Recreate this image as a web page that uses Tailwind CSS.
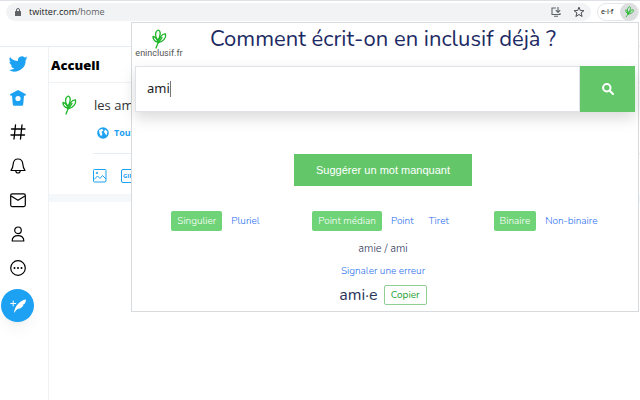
<!doctype html>
<html lang="fr">
  <head>
    <meta charset="UTF-8" />
    <meta name="viewport" content="width=device-width, initial-scale=1.0" />
    <script src="https://cdn.jsdelivr.net/npm/@tailwindcss/browser@4"></script>
    <title>eninclusif.fr</title>
  </head>
  <body class="relative flex h-screen flex-col overflow-hidden bg-white font-['Open_Sans',sans-serif] text-black">
    <svg class="hidden">
      <symbol id="leaf" viewBox="0 0 16 20">
        <g fill="none" stroke="#1fb72a" stroke-width="1.3" stroke-linecap="round" stroke-linejoin="round">
          <path d="M5 19L7 14L11 8.500" />
          <path d="M7 13.500C6.500 10.500 4.500 8 2 7.500C1.800 9.500 3.500 12.500 6.500 13" />
          <path d="M6.800 11.500C3.500 8 4 2 7.300 1C10.300 2 9.500 7.500 6.800 11.500" />
          <path d="M7.500 13.500C7.500 9.500 11 4.500 14.500 5C15.500 8.500 12 13 7.500 13.500" />
        </g>
      </symbol>
    </svg>

    <!-- browser bar -->
    <header class="flex h-[23px] shrink-0 items-center border-t border-[#dee1e6] pr-px pl-1.5">
      <div class="flex h-[18px] grow items-center rounded-full bg-[#f1f3f4] pr-1.5 pl-2">
        <svg class="mr-[7px] h-2 w-2" viewBox="0 0 8 8" aria-hidden="true">
          <rect x="1" y="3" width="6" height="5" rx="0.500" fill="#5f6368" />
          <path d="M2.500 3V2a1.500 1.500 0 0 1 3 0v1" fill="none" stroke="#5f6368" />
        </svg>
        <span class="grow text-[9px] leading-4 text-[#202124]">twitter.com<span class="text-[#5f6368]">/home</span></span>
        <button type="button" aria-label="Installer" class="mr-3">
          <svg class="h-2.5 w-2.5" viewBox="0 0 10 10" fill="none" stroke="#5f6368" stroke-width="1.100">
            <path d="M5 1H1v6.500h8V6M3 9.300h4M7 0v5M4.800 3.200L7 5.400L9.200 3.200" />
          </svg>
        </button>
        <button type="button" aria-label="Favori">
          <svg class="h-3 w-3" viewBox="0 0 12 12" fill="none" stroke="#4a4d51">
            <path d="M6 1.200L7.300 4.500L10.900 4.700L8.100 6.900L9.100 10.500L6 8.500L2.900 10.500L3.900 6.900L1.100 4.700L4.700 4.500Z" />
          </svg>
        </button>
      </div>
      <div class="ml-1.5 flex h-[18px] w-[42px] items-center justify-between rounded-full border border-[#e4e6e8] pl-[3px]">
        <span class="text-[7px] leading-4 font-semibold text-[#444]">e·i·f</span>
        <button type="button" aria-label="eninclusif.fr" class="flex h-[18px] w-[18px] items-center justify-center rounded-full bg-[#dcdddf]">
          <svg class="h-3 w-3 rotate-12"><use href="#leaf" /></svg>
        </button>
      </div>
    </header>

    <div class="h-6 shrink-0 border-b border-[#e6ecf0]"></div>

    <div class="flex grow">
      <nav class="flex w-[49px] shrink-0 flex-col border-r border-[#eef2f5] pr-3">
        <a href="#" aria-label="Twitter" class="flex h-[34px] items-center justify-center">
          <svg class="h-5 w-5" viewBox="0 0 24 24" fill="#1da1f2">
            <path d="M23.600 4.900c-.8.400-1.700.6-2.700.8.900-.6 1.700-1.500 2-2.600-.9.500-1.900.9-2.900 1.100a4.700 4.700 0 0 0-8 4.200C8.200 8.200 4.700 6.400 2.400 3.500c-1.300 2.200-.6 4.900 1.400 6.200-.8 0-1.500-.2-2.100-.6 0 2.300 1.600 4.200 3.800 4.700-.7.200-1.400.2-2.100.1.600 1.900 2.300 3.200 4.300 3.200A9.400 9.400 0 0 1 .8 19a13.300 13.300 0 0 0 20.400-11.800c.9-.6 1.700-1.400 2.400-2.300z" />
          </svg>
        </a>
        <a href="#" aria-label="Accueil" class="flex h-[34px] items-center justify-center">
          <svg class="h-[18px] w-[18px]" viewBox="0 0 18 18">
            <path d="M9 1L1 5.200L1.800 7L3 6.500L3.800 15.500Q4 16.800 5.300 16.800H12.700Q14 16.800 14.200 15.500L15 6.500L16.200 7L17 5.200Z" fill="#1da1f2" />
            <circle cx="9" cy="9.500" r="2.600" fill="white" />
          </svg>
        </a>
        <a href="#" aria-label="Explorer" class="flex h-[34px] items-center justify-center">
          <svg class="h-4 w-4" viewBox="0 0 16 16" fill="none" stroke="black" stroke-width="1.300" stroke-linecap="round">
            <path d="M5.500 1L4 15M12 1L10.500 15M1.500 5H15M1 11H14.500" />
          </svg>
        </a>
        <a href="#" aria-label="Notifications" class="flex h-[34px] items-center justify-center">
          <svg class="h-4 w-4" viewBox="0 0 16 16" fill="none" stroke="black" stroke-width="1.200" stroke-linejoin="round">
            <path d="M1 12.500C2.500 10.500 3 9 3.200 6C3.500 2.500 5.500 1 8 1S12.500 2.500 12.800 6C13 9 13.500 10.500 15 12.500ZM5.800 12.800A2.200 2.200 0 0 0 10.200 12.800" />
          </svg>
        </a>
        <a href="#" aria-label="Messages" class="flex h-[34px] items-center justify-center">
          <svg class="h-4 w-4" viewBox="0 0 16 16" fill="none" stroke="black" stroke-width="1.200" stroke-linejoin="round">
            <rect x="0.700" y="1.800" width="14.600" height="12.800" rx="1.500" />
            <path d="M1 4L8 8.300L15 4" />
          </svg>
        </a>
        <a href="#" aria-label="Profil" class="flex h-[34px] items-center justify-center">
          <svg class="h-4 w-4" viewBox="0 0 16 16" fill="none" stroke="black" stroke-width="1.200" stroke-linejoin="round">
            <circle cx="8" cy="4.300" r="3.300" />
            <path d="M2.200 15C2 11.500 4.500 9.700 8 9.700S14 11.500 13.800 15Z" />
          </svg>
        </a>
        <a href="#" aria-label="Plus" class="flex h-[34px] items-center justify-center">
          <svg class="h-4 w-4" viewBox="0 0 16 16">
            <circle cx="8" cy="8" r="7.300" fill="none" stroke="black" stroke-width="1.200" />
            <g fill="black"><circle cx="4.500" cy="8" r="1" /><circle cx="8" cy="8" r="1" /><circle cx="11.500" cy="8" r="1" /></g>
          </svg>
        </a>
        <button type="button" aria-label="Tweeter" class="mt-1 ml-px flex h-[33px] w-[33px] items-center justify-center rounded-full bg-[#1da1f2] shadow-lg shadow-black/5">
          <svg class="h-4 w-4" viewBox="0 0 16 16" fill="none" stroke="white" stroke-linecap="round">
            <path d="M0.700 5.500H5.700M3.200 3V8" />
            <path d="M4 15C4.500 9 9 2.500 16 1.500C16 4.500 14.500 6.500 12.500 7L13.500 7.500C12 10 9 11 7.500 11C6.500 12 5 13.500 4 15Z" fill="white" stroke="none" />
          </svg>
        </button>
      </nav>

      <main class="grow">
        <h1 class="h-9 border-b border-[#eef2f5] pl-0.5 text-[13px] leading-9 font-extrabold">Accueil</h1>
        <section class="flex h-[119px] border-b-8 border-[#f5f8fa] pl-3">
          <svg class="mt-3 mr-4 h-5 w-4 shrink-0"><use href="#leaf" /></svg>
          <div class="grow">
            <p class="pt-2.5 pl-px text-[13px] leading-6 text-[#333]">les ami</p>
            <button type="button" class="mt-2 flex items-center gap-[5px] pl-1 text-[9px] leading-4 font-bold text-[#1da1f2]">
              <svg class="h-3 w-3" viewBox="0 0 12 12">
                <circle cx="6" cy="6" r="5.800" fill="#1da1f2" />
                <path d="M2 3L5 2L6.500 3.200L4.500 5L5.500 7L4 9.500L2.500 6.500ZM8 2.500L10.500 4.500L9.500 8.500L8 6.500L7 5Z" fill="white" />
              </svg>
              Tout le monde
            </button>
            <div class="mt-3 flex gap-3.5 border-t border-[#e6ecf0] pt-[15px] text-[#1da1f2]">
              <button type="button" aria-label="Image">
                <svg class="h-3.5 w-3.5" viewBox="0 0 14 14" fill="none" stroke="currentColor">
                  <rect x="0.500" y="0.500" width="12.500" height="12.500" rx="1" />
                  <path d="M1 10.500L4.500 7L7 9.500L9.500 6.500L13 10" />
                  <circle cx="4" cy="4" r="0.800" />
                </svg>
              </button>
              <button type="button" class="h-3.5 rounded-xs border border-current px-px text-[6px] leading-3 font-bold">GIF</button>
            </div>
          </div>
        </section>
      </main>
    </div>

    <!-- extension popup -->
    <div class="absolute top-[22px] right-px bottom-[88px] left-[131px] border border-[#d8dbde] bg-white px-[3px] font-[Nunito,'Open_Sans',sans-serif] text-[10px]">
      <div class="relative flex h-[43px] justify-center pr-1">
        <a href="#" class="absolute top-1.5 left-0 flex w-12 flex-col items-center font-[Roboto,sans-serif] text-[9px] leading-3 text-[#555]">
          <svg class="h-5 w-4 shrink-0"><use href="#leaf" /></svg>
          <span class="-mt-0.5">eninclusif.fr</span>
        </a>
        <h2 class="text-[22px] leading-8 font-normal text-[#1c2a63]">Comment écrit-on en inclusif déjà ?</h2>
      </div>
      <form class="flex h-[46px] shadow-[0_6px_14px_rgba(0,0,0,0.15)]">
        <div class="flex grow items-center border border-[#dfe3e8] pl-[11px]">
          <input type="text" value="ami" aria-label="Mot" class="field-sizing-content font-['Noto_Sans',sans-serif] text-[13px] text-[#222] caret-transparent outline-none" />
          <span class="h-4 w-px bg-[#777]"></span>
        </div>
        <button type="button" aria-label="Rechercher" class="flex w-[55px] items-center justify-center bg-[#63c76a]">
          <svg class="h-3 w-3" viewBox="0 0 12 12" fill="none" stroke="white" stroke-width="2" stroke-linecap="round">
            <circle cx="4.800" cy="4.800" r="3.700" />
            <path d="M7.800 7.800L11 11" />
          </svg>
        </button>
      </form>
      <div class="mt-[42px] flex justify-center pr-1">
        <button type="button" class="h-8 bg-[#63c76a] px-[22px] font-['Liberation_Sans',sans-serif] text-[11px] text-white">Suggérer un mot manquant</button>
      </div>
      <div class="mt-[25px] grid grid-cols-3 pr-1 pl-px leading-5">
        <div class="flex justify-center gap-[3px]">
          <button type="button" class="rounded-xs bg-[#6fd377] px-1.5 font-light text-white">Singulier</button>
          <button type="button" class="px-1.5 font-light text-[#1f6ff0]">Pluriel</button>
        </div>
        <div class="flex justify-center gap-[3px]">
          <button type="button" class="rounded-xs bg-[#6fd377] px-1.5 font-light text-white">Point médian</button>
          <button type="button" class="px-1.5 font-light text-[#1f6ff0]">Point</button>
          <button type="button" class="px-1.5 font-light text-[#1f6ff0]">Tiret</button>
        </div>
        <div class="flex justify-center gap-[3px]">
          <button type="button" class="rounded-xs bg-[#6fd377] px-1.5 font-light text-white">Binaire</button>
          <button type="button" class="px-1.5 font-light text-[#1f6ff0]">Non-binaire</button>
        </div>
      </div>
      <p class="mt-2 pr-1 text-center text-[11px] leading-5 font-light text-[#2b3358]">amie / ami</p>
      <p class="mt-0.5 pr-1 text-center leading-5"><a href="#" class="font-light text-[#1f6ff0]">Signaler une erreur</a></p>
      <div class="mt-1 flex items-center justify-center gap-1.5 pr-1">
        <span class="text-base leading-5 text-[#2b3358]">ami·e</span>
        <button type="button" class="rounded-xs border border-[#8fce95] px-1.5 leading-[18px] text-[#28a035]">Copier</button>
      </div>
    </div>
  </body>
</html>
